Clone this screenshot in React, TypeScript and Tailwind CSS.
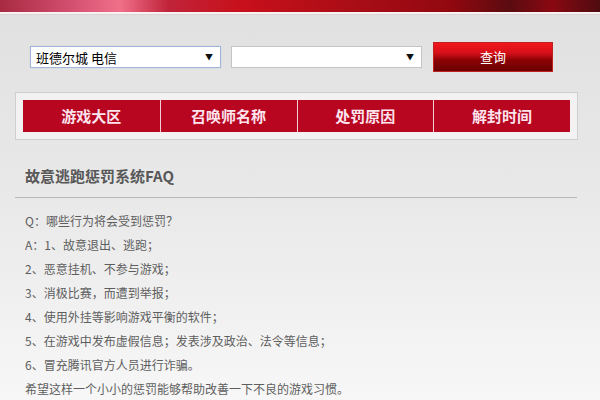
import { ReactNode } from "react"

const cjk = "font-['Microsoft_YaHei','Noto_Sans_CJK_SC',sans-serif]"

const columns = ["游戏大区", "召唤师名称", "处罚原因", "解封时间"]

const faq = [
  "Q：哪些行为将会受到惩罚？",
  "A：1、故意退出、逃跑；",
  "2、恶意挂机、不参与游戏；",
  "3、消极比赛，而遭到举报；",
  "4、使用外挂等影响游戏平衡的软件；",
  "5、在游戏中发布虚假信息；发表涉及政治、法令等信息；",
  "6、冒充腾讯官方人员进行诈骗。",
  "希望这样一个小小的惩罚能够帮助改善一下不良的游戏习惯。",
]

function FakeSelect({ children, focused }: { children?: ReactNode; focused?: boolean }) {
  return (
    <div
      className={`flex h-[22px] w-[191px] items-center justify-between bg-white pl-[5px] pr-[7px] text-[13px] text-black ${
        focused ? "border border-[#9fb6d8] shadow-[0_0_1px_#b9cbe6]" : "border border-[#c4c4c4]"
      }`}
    >
      <span className="leading-none">{children}</span>
      <span className="text-[8px] leading-none text-[#111]">▼</span>
    </div>
  )
}

export default function App() {
  return (
    <div className={`h-[400px] w-[600px] overflow-hidden bg-gradient-to-b from-[#e0e0e0] via-[#e9e9e9] to-[#f7f7f7] ${cjk}`}>
      {/* banner strip */}
      <div className="h-[12px] bg-[linear-gradient(90deg,#a82a42_0%,#d45070_12%,#f0708a_20%,#c0243a_28%,#c8101b_40%,#a80d16_60%,#92080f_75%,#5a0c10_85%,#8a0812_92%,#4e0c10_100%)]" />
      <div className="h-[2px] bg-[#f7f3f3]" />
      <div className="h-[1px] bg-[#dcd2d4]" />

      {/* search row */}
      <div className="flex items-center pl-[30px] pt-[27px]">
        <FakeSelect focused>班德尔城 电信</FakeSelect>
        <div className="ml-[10px]">
          <FakeSelect />
        </div>
        <button
          type="button"
          className="ml-[11px] flex h-[30px] w-[120px] items-center justify-center border border-[#c02020] bg-[linear-gradient(180deg,#f0161c_0%,#d8101a_35%,#8e0306_60%,#6a0000_100%)] text-[13px] text-white"
        >
          查询
        </button>
      </div>

      {/* result header */}
      <div className="mx-[15px] mt-[20px] w-[563px] border border-[#cfcfcf] bg-[#f3f1f1] p-[7px]">
        <div className="grid h-[32px] grid-cols-4 bg-[#b80620]">
          {columns.map((c, i) => (
            <div
              key={c}
              className={`flex items-center justify-center text-[15px] font-bold text-[#fde4ee] ${i > 0 ? "border-l border-[#f0d0d6]" : ""}`}
            >
              {c}
            </div>
          ))}
        </div>
      </div>

      {/* faq */}
      <div className="mx-[15px] mt-[26px] w-[562px] border-b border-[#b8b8b8] pb-[12px] pl-[10px] text-[15px] font-bold leading-[19px] text-[#585858]">
        故意逃跑惩罚系统FAQ
      </div>
      <div className="pl-[25px] pt-[11px] text-[12px] leading-[24px] text-[#5e5e5e]">
        {faq.map((line) => (
          <div key={line}>{line}</div>
        ))}
      </div>
    </div>
  )
}
